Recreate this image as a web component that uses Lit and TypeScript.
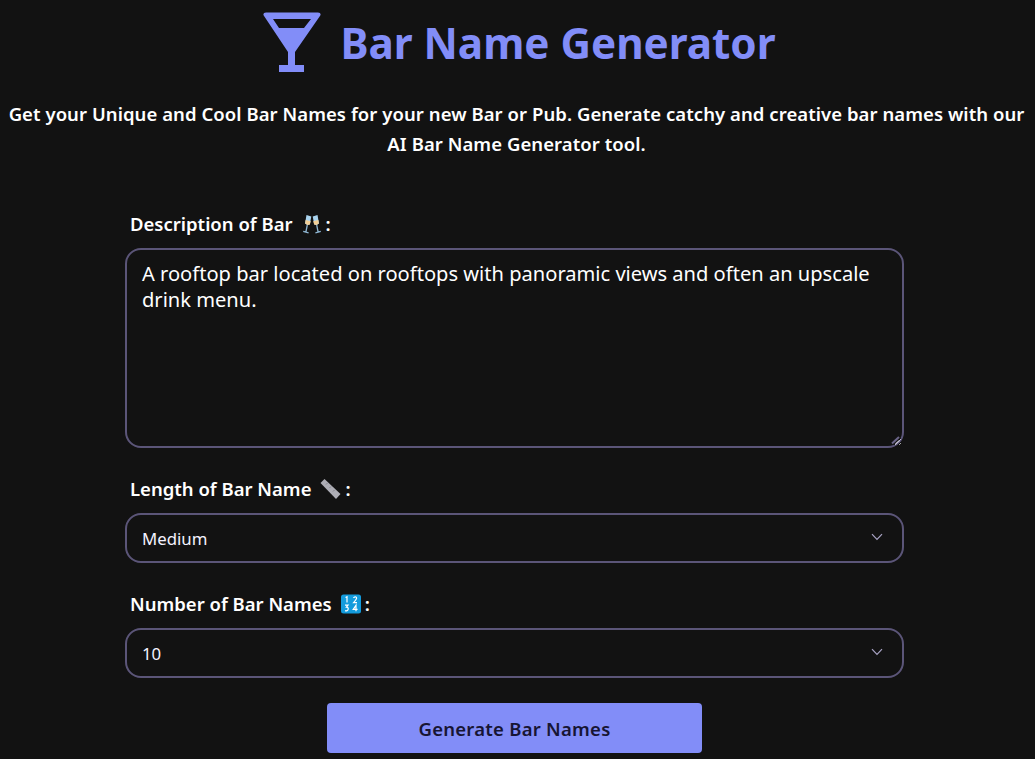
import { LitElement, html, css } from "lit";
import { customElement } from "lit/decorators.js";

const chevron = html`<svg class="chev" viewBox="0 0 12 8" width="12" height="8" fill="none" stroke="#a8a3c4" stroke-width="1.2"><path d="M1 1.2 6 6.4 11 1.2"/></svg>`;

@customElement("app-root")
export class AppRoot extends LitElement {
  static styles = css`
    :host { display: block; height: 759px; overflow: hidden; background: #121212; color: #fff; font-family: "Noto Sans", "Open Sans", sans-serif; }
    * { box-sizing: border-box; }
    .head { display: flex; justify-content: center; align-items: center; gap: 19px; padding-top: 12px; height: 72px; margin-left: 4px; }
    .logo { width: 58px; height: 60px; display: block; }
    h1 { margin: 2px 0 0; font-size: 42.2px; line-height: 64px; font-weight: 700; color: #828df8; }
    .intro { margin: 27px 0 0; text-align: center; font-size: 18.5px; letter-spacing: 0.06px; line-height: 30px; font-weight: 600; padding: 0 7px 0 5px; }
    form { width: 779px; margin: 53px 0 0 125px; display: flex; flex-direction: column; }
    label { display: flex; align-items: center; padding-left: 5px; font-size: 18.5px; line-height: 24px; font-weight: 600; height: 24px; margin-bottom: 12px; }
    label svg { display: block; margin: 0 4px 0 9px; }
    textarea, select { width: 100%; background: #121212; color: #f4f2ff; border: 2px solid #5b5578; border-radius: 16px; outline: none; font-family: inherit; display: block; }
    .ta { position: relative; margin-bottom: 29px; }
    textarea { height: 200px; padding: 11px 15px; font-size: 20.1px; line-height: 26px; color: #fff; }
    .grip { position: absolute; right: 2px; bottom: 2px; pointer-events: none; }
    .sel { position: relative; margin-bottom: 29px; }
    select { height: 50px; padding: 1px 15px 0; font-size: 16.8px; appearance: none; -webkit-appearance: none; }
    .chev { position: absolute; right: 21px; top: 20px; pointer-events: none; }
    .sel.last { margin-bottom: 25px; }
    button { align-self: center; width: 375px; height: 50px; border: 0; border-radius: 4px; background: #828df8; color: #171534; font-family: inherit; font-size: 18.5px; letter-spacing: 0.25px; font-weight: 600; }
  `;

  render() {
    return html`
      <div class="head">
        <svg class="logo" viewBox="0 0 58 60">
          <path fill="#828df8" fill-rule="evenodd" d="M3 0.5H55Q58.5 0.5 57.3 3.5L32 40V53H41V60H16V53H25V40L0.7 3.5Q-0.5 0.5 3 0.5ZM10 7 16 16H41L48 7Z"/>
        </svg>
        <h1>Bar Name Generator</h1>
      </div>
      <p class="intro">Get your Unique and Cool Bar Names for your new Bar or Pub. Generate catchy and creative bar names with our AI Bar Name Generator tool.</p>
      <form>
        <label>Description of Bar
          <svg width="20" height="20" viewBox="0 0 20 20">
            <path d="M4.5 1 9.3 2.4 7.8 10.4 5.4 11 3 9.4Z" fill="#a9d3ee"/>
            <path d="M3.6 6 8.8 7.2 7.8 10.4 5.4 11 3.2 9.4Z" fill="#f2cf96"/>
            <path d="M5.3 11 3.9 18M1.2 17.4 6.6 18.8" stroke="#8fb6d2" stroke-width="1.3" fill="none"/>
            <path d="M15.5 1 10.7 2.4 12.2 10.4 14.6 11 17 9.4Z" fill="#a9d3ee"/>
            <path d="M16.4 6 11.2 7.2 12.2 10.4 14.6 11 16.8 9.4Z" fill="#f2cf96"/>
            <path d="M14.7 11 16.1 18M13.4 18.8 18.8 17.4" stroke="#8fb6d2" stroke-width="1.3" fill="none"/>
          </svg>:</label>
        <div class="ta">
          <textarea .value=${"A rooftop bar located on rooftops with panoramic views and often an upscale drink menu."}></textarea>
          <svg class="grip" width="12" height="12" viewBox="0 0 12 12" fill="none"><path d="M2 9.5 9 3" stroke="#6b6588" stroke-width="2"/><path d="M5.5 10 9.5 6.5" stroke="#c9c6d6" stroke-width="1.2"/></svg>
        </div>

        <label>Length of Bar Name
          <svg width="21" height="20" viewBox="0 0 21 20">
            <path d="M4.5 0 20.5 15 16 20 0.5 4Z" fill="#aeaeb6"/>
            <path d="M6 5.5 7.5 4M9.5 9 11 7.5M13 12.5 14.5 11" stroke="#85858d" stroke-width="1"/>
          </svg>:</label>
        <div class="sel"><select><option>Medium</option></select>${chevron}</div>

        <label>Number of Bar Names
          <svg width="20" height="20" viewBox="0 0 20 20">
            <rect x="0" y="0.5" width="20" height="19" rx="2.5" fill="#139bdc"/>
            <path d="M4.5 3.5 6 2.8V8.6M12.5 4Q13 2.8 14.2 2.8 15.8 2.8 15.5 4.6 15 6 12.6 8.6H16M4 11.2H7L5.4 13.2Q7.4 13.2 7.2 15.2 6.6 17.4 4 16.6M15 17.2V11.2L12.2 15.4H16.6" stroke="#fff" stroke-width="1.2" fill="none"/>
          </svg>:</label>
        <div class="sel last"><select><option>10</option></select>${chevron}</div>

        <button type="button">Generate Bar Names</button>
      </form>
    `;
  }
}
